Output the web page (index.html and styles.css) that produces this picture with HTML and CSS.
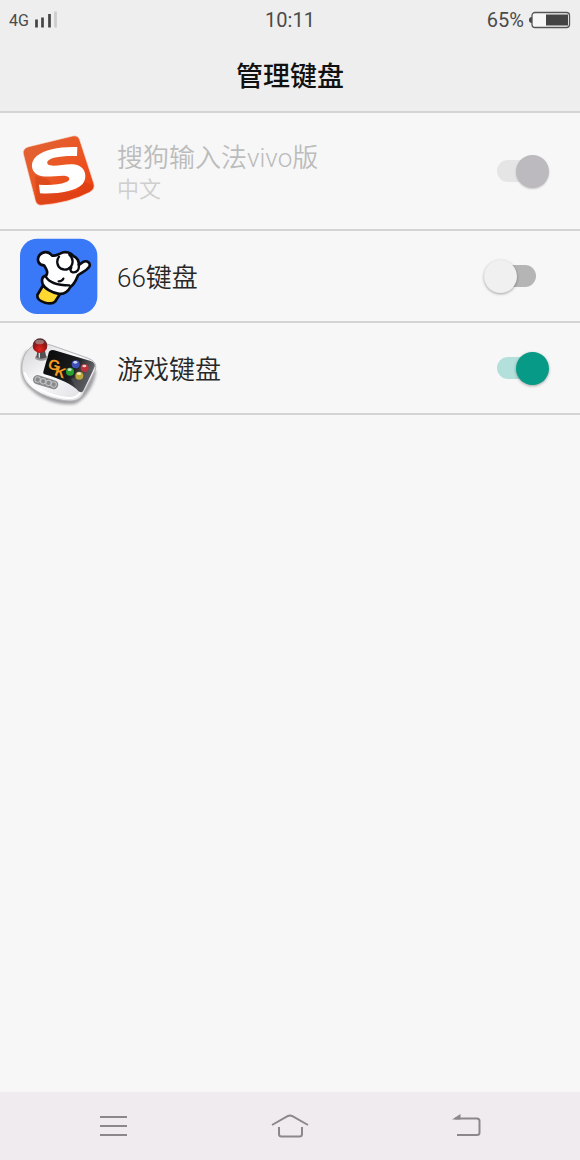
FILE: index.html
```html
<!DOCTYPE html>
<html lang="zh-CN">
  <head>
    <meta charset="UTF-8" />
    <meta name="viewport" content="width=device-width, initial-scale=1.0" />
    <title>管理键盘</title>
    <link rel="stylesheet" href="styles.css">
  </head>
  <body>
    <header>
      <div class="status-bar">
        <div class="signal">
          <span class="network">4G</span>
          <svg width="24" height="18" viewBox="0 0 24 18" aria-hidden="true">
            <path d="M2.500 8.500v8M8.500 6.500v10M15.500 3v13.500" stroke="#444" stroke-width="2.700" />
            <path d="M21.500 0.500v16" stroke="#ccc" stroke-width="2.700" />
          </svg>
        </div>
        <span class="time">10:11</span>
        <div class="battery">
          <span>65%</span>
          <svg width="42" height="18" viewBox="0 0 42 18" aria-hidden="true">
            <path d="M3 6Q0 6 0 9t3 3z" fill="#444" />
            <rect x="3" y="1.500" width="37.500" height="15" rx="3" fill="#f7f7f7" stroke="#555" stroke-width="1.300" />
            <rect x="17" y="3.500" width="22" height="11" fill="#444" />
          </svg>
        </div>
      </div>
      <h1>管理键盘</h1>
    </header>

    <main>
      <!-- 搜狗输入法 -->
      <label class="row row-tall disabled">
        <svg class="app-icon" viewBox="30 21 234 234" aria-hidden="true">
          <defs>
            <linearGradient id="sogou" x1="0" y1="0" x2="1" y2="1">
              <stop offset="0" stop-color="#e06436" />
              <stop offset="0.5" stop-color="#ea5724" />
              <stop offset="1" stop-color="#ef3c10" />
            </linearGradient>
          </defs>
          <path d="M56 65 188 33Q204 30 209 44L252 177Q256 192 239 202 180 234 94 241 80 241 76 227L40 87Q37 70 56 65Z" fill="url(#sogou)" stroke="#fbe3d9" stroke-width="2" />
          <path d="M76 153 112 161 145 203 200 198 221 170 248 180Q252 193 236 201 180 229 94 238 81 238 78 225Z" fill="#c9350d" opacity="0.35" />
          <path d="M202 66C151 64 105 73 80 93 58 112 63 140 84 150 105 160 137 151 164 152 181 154 182 166 169 171 145 180 118 181 87 179L90 205C137 208 194 201 217 178 233 159 227 131 207 122 179 110 141 127 120 121 105 116 111 103 132 98 154 93 176 92 201 93Z" fill="#fff" />
        </svg>
        <span class="label">
          <span class="name">搜狗输入法vivo版</span>
          <span class="sub">中文</span>
        </span>
        <input class="switch" type="checkbox" checked disabled />
      </label>

      <!-- 66键盘 -->
      <label class="row">
        <svg class="app-icon" viewBox="30 21 234 234" aria-hidden="true">
          <rect x="30" y="26" width="232" height="226" rx="52" fill="#3978f6" />
          <g stroke="#080b12" stroke-width="8" stroke-linecap="round" stroke-linejoin="round">
            <path d="M98 168 82 195Q80 211 105 218 127 224 136 214L152 189Z" fill="#ffd832" />
            <path d="M108 137C116 127 109 117 102 106 86 106 79 90 88 76 100 61 117 65 125 76 137 79 140 75 150 71 168 61 184 70 190 78 203 84 207 93 207 105L219 96C231 90 243 98 238 110 230 123 214 127 204 136 199 149 193 164 181 171 173 187 162 194 144 191 126 188 103 176 98 162 94 149 96 139 108 137Z" fill="#fff" />
            <path d="M107 139C117 158 144 166 178 166M147 80C138 92 141 109 153 116 167 123 182 116 186 104 190 92 186 81 178 74M206 104C209 118 201 129 188 127 181 125 180 119 184 112M160 146C158 151 153 154 146 154" fill="none" stroke-width="7" />
          </g>
        </svg>
        <span class="label">
          <span class="name">66键盘</span>
        </span>
        <input class="switch" type="checkbox" />
      </label>

      <!-- 游戏键盘 -->
      <label class="row">
        <svg class="app-icon" viewBox="30 15 234 234" aria-hidden="true">
          <defs>
            <linearGradient id="pad" x1="0" y1="0" x2="1" y2="1">
              <stop offset="0" stop-color="#d2d2d6" />
              <stop offset="0.45" stop-color="#fafafc" />
              <stop offset="1" stop-color="#d9d9df" />
            </linearGradient>
            <linearGradient id="screen" x1="0" y1="0" x2="1" y2="0.4">
              <stop offset="0" stop-color="#080808" />
              <stop offset="0.65" stop-color="#1b1c1e" />
              <stop offset="1" stop-color="#66686b" />
            </linearGradient>
            <radialGradient id="ball" cx="0.5" cy="0.75" r="0.7">
              <stop offset="0" stop-color="#e8251e" />
              <stop offset="0.6" stop-color="#991717" />
              <stop offset="1" stop-color="#4f3434" />
            </radialGradient>
            <filter id="soft" x="-10%" y="-10%" width="120%" height="130%">
              <feGaussianBlur stdDeviation="4" />
            </filter>
          </defs>
          <path d="M50 80C27 117 27 162 58 193 90 226 151 248 195 239 226 229 257 175 258 140Z" fill="#77777b" opacity="0.7" filter="url(#soft)" />
          <path d="M72 64C96 53 120 62 142 70L235 103C262 114 261 131 250 150L218 212C207 232 185 233 158 229 113 222 70 203 48 173 24 139 36 82 72 64Z" fill="url(#pad)" stroke="#b4b4b8" stroke-width="3" />
          <path d="M43 145C62 192 120 217 172 222 193 224 205 215 212 205" fill="none" stroke="#fff" stroke-width="6" />
          <path d="M117 83Q122 76 133 79L242 111Q260 118 252 133L219 201Q214 208 205 201 177 172 104 151 98 149 100 143Z" fill="url(#screen)" />
          <path d="M183 164 248 140 219 201Q214 208 205 201 195 186 183 164Z" fill="#515356" opacity="0.65" />
          <text class="pad-logo" x="111" y="131" transform="rotate(20 111 131)">G</text>
          <text class="pad-logo" x="131" y="153" transform="rotate(20 131 153)">K</text>
          <circle cx="197" cy="121" r="12" fill="#3f50b6" />
          <circle cx="224" cy="132" r="12" fill="#b9333d" />
          <circle cx="180" cy="143" r="12" fill="#27a331" />
          <circle cx="208" cy="155" r="12" fill="#bba83d" />
          <g fill="#fff" opacity="0.75">
            <ellipse cx="196" cy="115" rx="6" ry="4" />
            <ellipse cx="223" cy="126" rx="6" ry="4" />
            <ellipse cx="179" cy="137" rx="6" ry="4" />
            <ellipse cx="207" cy="149" rx="6" ry="4" />
          </g>
          <g transform="rotate(17 107 174)">
            <rect x="68" y="161" width="78" height="27" rx="13" fill="#88898b" />
            <g fill="none" stroke="#c4c4c5" stroke-width="3">
              <circle cx="82" cy="174" r="8" />
              <circle cx="99" cy="174" r="8" />
              <circle cx="116" cy="174" r="8" />
              <circle cx="132" cy="174" r="8" />
            </g>
          </g>
          <ellipse cx="94" cy="101" rx="19" ry="9" fill="#99999b" />
          <path d="M82 80h23l4 20q-15 8-30 0Z" fill="#515154" />
          <path d="M88 86v15" stroke="#ddd" stroke-width="4" />
          <circle cx="90" cy="65" r="22" fill="url(#ball)" />
          <ellipse cx="89" cy="54" rx="13" ry="7" fill="#b8a7a7" opacity="0.6" />
        </svg>
        <span class="label">
          <span class="name">游戏键盘</span>
        </span>
        <input class="switch" type="checkbox" checked />
      </label>
    </main>

    <nav class="nav-bar">
      <button class="nav-btn" aria-label="菜单">
        <svg width="40" height="28" viewBox="0 0 40 28">
          <path d="M7 5h27M7 14h27M7 23h27" />
        </svg>
      </button>
      <button class="nav-btn" aria-label="主页">
        <svg width="40" height="28" viewBox="0 0 40 28">
          <path d="M2 13 18 4q2-1 4 0l16 9M9 15v7q0 2.500 2.500 2.500h18q2.500 0 2.500-2.500v-7" />
        </svg>
      </button>
      <button class="nav-btn" aria-label="返回">
        <svg width="40" height="28" viewBox="0 0 40 28">
          <path d="M8 6.500h22q2.500 0 2.500 2.500v11.500q0 2.500-2.500 2.500h-20" />
          <path class="arrow" d="M5 7.500 13.500 2v5.500z" />
        </svg>
      </button>
    </nav>
  </body>
</html>
```

FILE: styles.css
```css
:root {
  --bar-color: #eeeeee;
  --background-color: #f7f7f7;
  --line-color: #d4d4d4;
  --text-color: #272727;
  --accent-color: #079a87;
  --font-family: Roboto, "Noto Sans CJK SC", sans-serif;
}
* {
  box-sizing: border-box;
  margin: 0;
  padding: 0;
}
body {
  display: flex;
  flex-direction: column;
  min-height: 100vh;
  font-family: var(--font-family);
  background: var(--background-color);
  color: var(--text-color);
}
header {
  background: var(--bar-color);
  border-bottom: 2px solid var(--line-color);
}
.status-bar {
  display: grid;
  grid-template-columns: 1fr auto 1fr;
  align-items: center;
  height: 40px;
  padding: 0 9px;
  font-size: 20px;
  color: #4a4a4a;
}
.signal,
.battery {
  display: flex;
  align-items: center;
  gap: 5px;
}
.battery {
  justify-content: flex-end;
}
.network {
  font-size: 16px;
}
h1 {
  padding-top: 4px;
  line-height: 67px;
  font-size: 27px;
  font-weight: 500;
  text-align: center;
  color: #111;
}
main {
  flex: 1;
}
.row {
  display: flex;
  align-items: center;
  gap: 19px;
  height: 92px;
  padding: 0 31px 0 20px;
  border-bottom: 2px solid var(--line-color);
}
.row-tall {
  height: 118px;
}
.app-icon {
  flex: none;
  width: 78px;
  height: 78px;
}
.pad-logo {
  font-family: "Liberation Sans", sans-serif;
  font-size: 44px;
  font-weight: bold;
  fill: #f79b20;
}
.label {
  display: flex;
  flex: 1;
  flex-direction: column;
  padding-top: 4px;
}
.name {
  line-height: 34px;
  font-size: 26px;
  font-weight: 350;
}
.sub {
  line-height: 30px;
  font-size: 22px;
  font-weight: 350;
}
.disabled .name {
  color: #bcbcbc;
}
.disabled .sub {
  color: #cecece;
}

/* switch */
.switch {
  appearance: none;
  position: relative;
  display: flex;
  align-items: center;
  justify-content: center;
  width: 65px;
  height: 33px;
  cursor: pointer;
}
.switch::before {
  content: "";
  width: 39px;
  height: 22px;
  border-radius: 11px;
  background: #b5b5b5;
}
.switch::after {
  content: "";
  position: absolute;
  top: 0;
  left: 0;
  width: 33px;
  height: 33px;
  border-radius: 50%;
  background: #f1f0f1;
  box-shadow: 0 1px 3px rgba(0, 0, 0, 0.35);
}
.switch:checked::before {
  background: #b3e0da;
}
.switch:checked::after {
  left: 32px;
  background: var(--accent-color);
}
.switch:disabled::before {
  background: #e5e5e5;
}
.switch:disabled::after {
  background: #bcbabe;
  box-shadow: 0 1px 2px rgba(0, 0, 0, 0.2);
}

/* bottom navigation */
.nav-bar {
  display: flex;
  justify-content: space-around;
  height: 68px;
  padding: 0 25px;
  background: #efebee;
}
.nav-btn {
  display: flex;
  flex: 1;
  align-items: center;
  justify-content: center;
  background: none;
  border: none;
  cursor: pointer;
}
.nav-btn svg {
  fill: none;
  stroke: #8b878a;
  stroke-width: 2;
}
.nav-btn .arrow {
  fill: #8b878a;
  stroke: none;
}
```
